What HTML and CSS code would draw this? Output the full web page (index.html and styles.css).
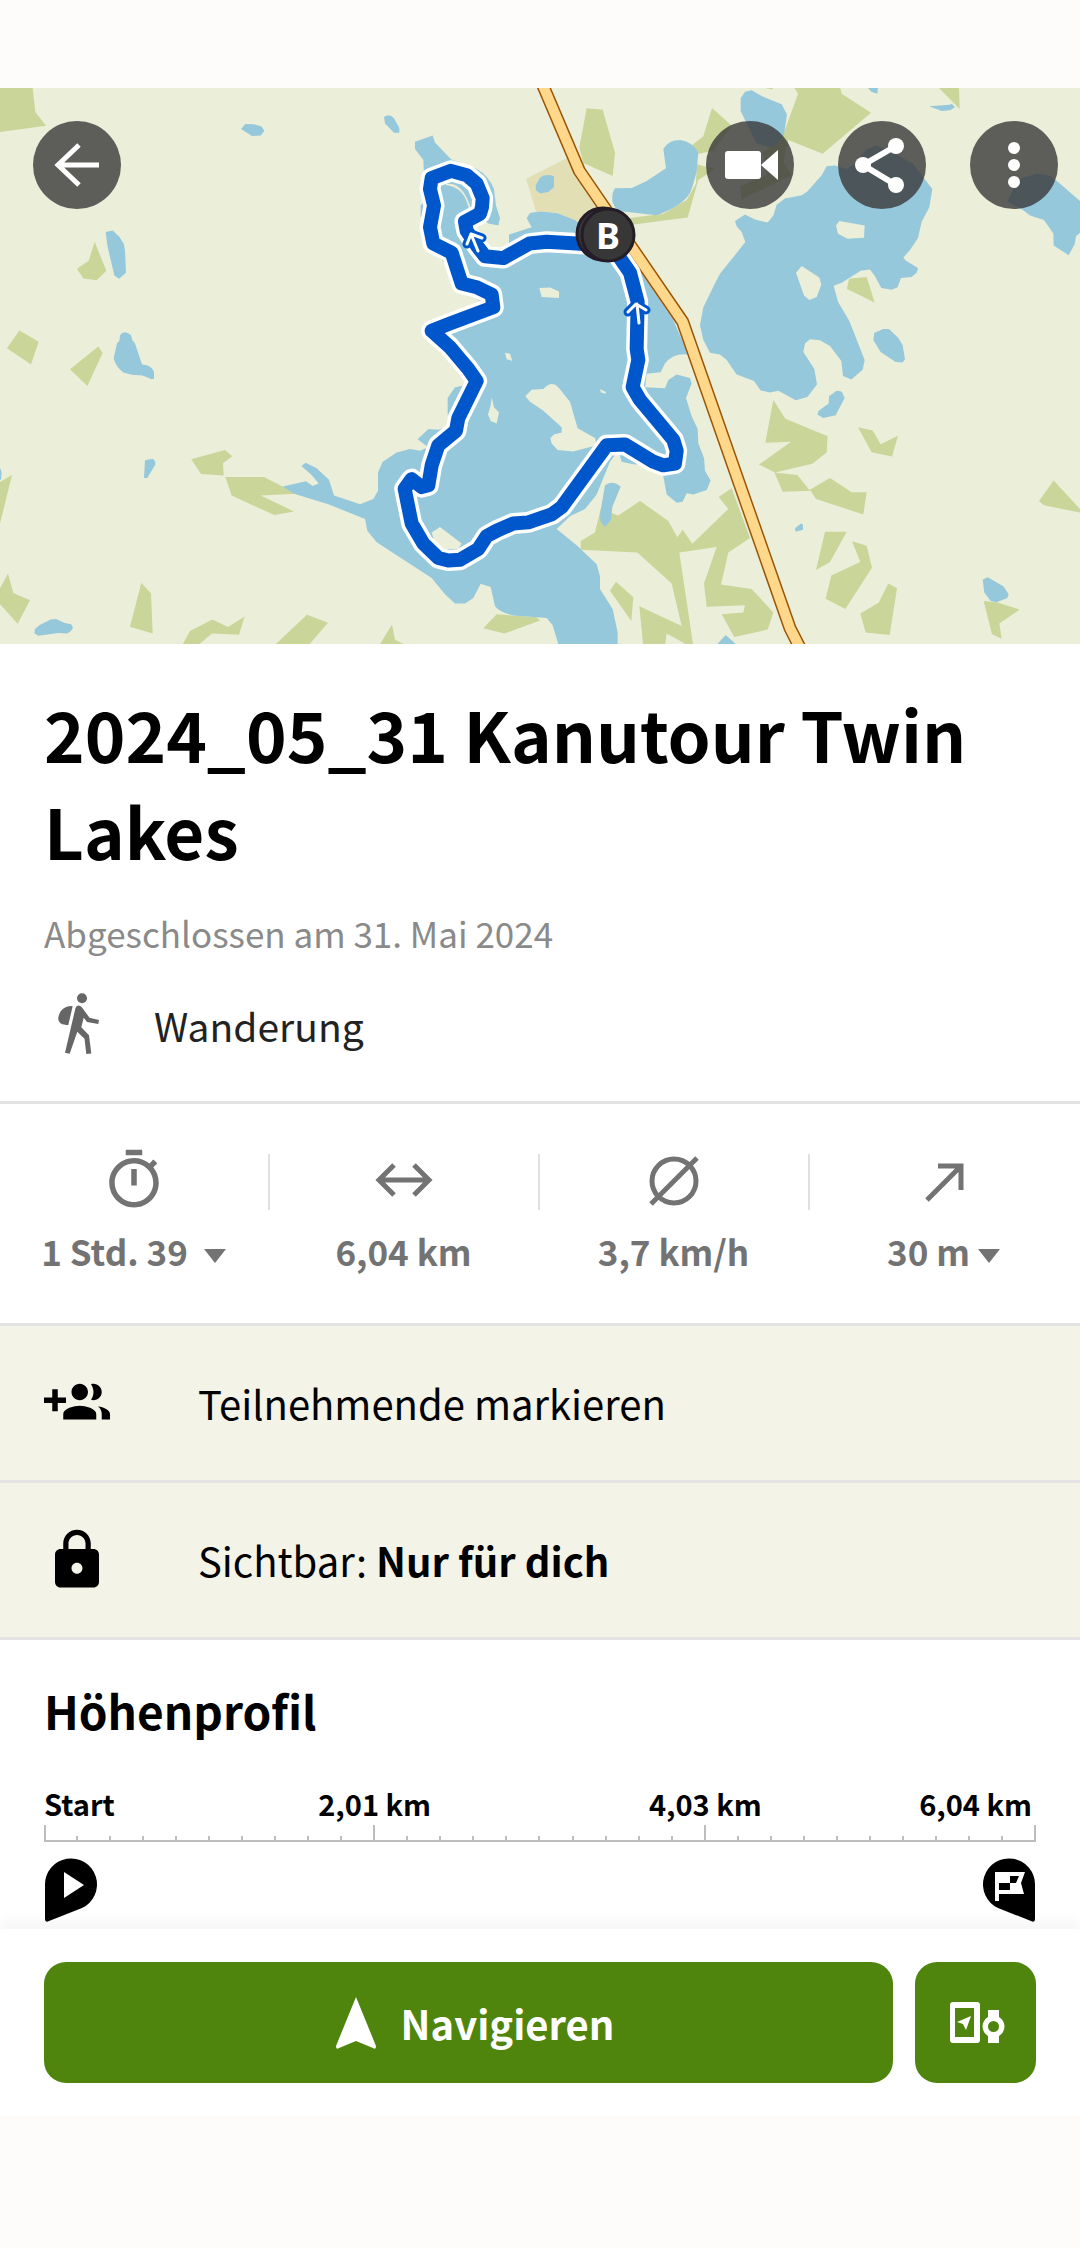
FILE: index.html
```html
<!DOCTYPE html>
<html lang="de">
<head>
<meta charset="utf-8">
<meta name="viewport" content="width=device-width, initial-scale=1">
<title>2024_05_31 Kanutour Twin Lakes</title>
<link rel="stylesheet" href="styles.css">
</head>
<body>
<header class="map">
  <svg class="map-canvas" viewBox="0 88 1080 556" preserveAspectRatio="xMidYMid slice" role="img" aria-label="Karte der Tour">
    <rect class="land" y="88" width="1080" height="556"/>
    <g transform="translate(0 80) scale(.33333 .3635)">
      <path class="wood" d="M0 22H98L106 88 138 126 0 143zM284 445 319 525 290 551 250 546 231 519 266 497zM58 689 116 720 93 783 21 738zM295 733 308 751 262 842 210 796zM574 1043 675 1018 697 1035 669 1054 671 1088 603 1084zM676 1092H792L890 1138 782 1143 882 1187 823 1197 695 1143zM0 1106 36 1087 0 1220zM0 1398 24 1358 40 1411 90 1431 53 1496 0 1442zM424 1384 453 1412 458 1523 390 1504zM545 1558 570 1516 637 1484 684 1505 734 1476 717 1526 636 1523 590 1558zM820 1558 921 1471 984 1493 923 1558z"/>
      <path class="water" d="M723 135 736 121 762 122 785 128 793 140 782 153 756 154zM317 418 338 414 358 431 372 452 375 470 378 530 357 547 343 538 322 455zM360 702Q372 686 393 702L397 716 405 725 426 783Q452 783 462 803V822L455 823 428 813 396 811 370 805Q346 788 341 765L351 724 358 718zM435 1046 459 1042 466 1050V1058L442 1095H432zM0 1067 5 1080 3 1100H0zM103 1522 105 1510 118 1500 152 1484 168 1483 194 1494 214 1497 219 1507 213 1516 202 1523 175 1521 115 1529z"/>
    </g>
    <g transform="translate(370 80) scale(.33333 .3635)">
      <path class="field" d="M468 272 590 215 612 255 690 350 640 395 560 365 498 362z"/>
      <path class="wood" d="M650 78 698 82 735 200 728 264 640 228 628 185zM1026 77 1085 125 1050 170 1030 195 985 203 965 180 1000 155zM980 232 1035 245 985 275 953 378 785 398 775 380 880 368 950 330 978 285zM632 1268 675 1245 692 1180 745 1198 810 1158 895 1213 922 1258 938 1237 967 1276 1075 1180 1046 1147 1085 1123 1140 1260 1075 1300 1053 1388 1145 1400 1210 1465 1193 1512 1093 1532 1055 1470 1120 1465 1125 1445 1010 1449 1002 1385 1040 1285 928 1300 970 1558H960L890 1523 885 1558H820L808 1448 935 1502 905 1385 802 1300 632 1292zM738 1380 790 1423 784 1488 720 1405zM380 1470 500 1478 510 1487 403 1523 340 1508zM26 1558 66 1498 75 1540 115 1558z"/>
      <path class="water" d="M42 102Q58 90 72 105L88 132V145H72L45 120zM880 190Q895 165 930 165 965 168 985 200L980 250Q970 290 960 310 940 345 860 372L740 360 727 335Q725 310 735 298L785 297 830 278 888 243zM497 290 510 268Q530 256 552 265V295L535 308 510 312 498 303zM1097 390 1110 380 1115 410 1105 408zM1036 1558 1067 1527 1105 1558zM690 1195 705 1115Q730 1100 752 1118L727 1175 723 1210 705 1230 692 1215z"/>
      <path class="water" d="M135 170 188 153 195 172 243 218 320 245Q355 262 372 300L378 345 390 380 385 400 355 395 320 370 310 450 400 480 417 470V425L485 405 470 380 480 366 510 362 560 366 615 385 700 440 815 530 910 660 955 755Q910 750 885 780L872 804 830 808 825 845 885 848 895 825 920 810 960 820 965 835 948 875 965 925 983 960 985 1000 1002 1040 1005 1075 1022 1102 1010 1128 970 1140 950 1137 938 1160 920 1163 890 1140 880 1090 860 1060 790 1057 755 1050 745 1020 720 1050 680 1140 645 1180 600 1200 560 1235 620 1280 680 1332 690 1365V1400L728 1455 743 1520V1558H567L548 1500 530 1480 430 1473Q390 1465 375 1448L362 1395 332 1386 310 1425 285 1440H255L225 1415 185 1370 20 1272-8 1240-15 1208-125 1167-228 1138-262 1118-192 1104-172 1117-154 1110-175 1087-206 1062-193 1053-160 1068-123 1100-108 1143-30 1167 10 1153 24 1130V1080L38 1050 80 1025 120 1015 150 1020 175 1010 143 988 175 960 205 962 245 950 233 920V875L255 845 285 840 320 830 240 735 225 700 260 650 330 610 270 565 190 460 152 375V345L165 330 160 220 135 190z"/>
      <path class="land" d="M508 572 540 571 567 582V600L515 597zM405 750 420 753 427 773 410 768zM690 850 708 858 707 863 693 860zM365 873 372 900 387 915 380 945 362 938 354 920 362 895zM466 870 485 852 520 850Q545 826 565 845L600 885 623 958 675 985 680 1005 610 1022 563 1018 545 1000 541 985 552 975 575 970V955L520 910 480 885zM185 1245 210 1230 275 1275 265 1290 200 1290zM228 286Q275 280 300 345L298 360Q285 295 228 289z"/>
    </g>
    <g transform="translate(720 80) scale(.33333 .3635)">
      <path class="wood" d="M135 22H158V26zM222 20H360L365 38 453 90 308 203 205 165 190 225 215 262 65 328 60 292 140 262 130 200 190 150 234 38zM657 22H717L719 80zM381 575 387 547 440 542 464 612zM160 880 196 932 323 980 320 1025 277 1056 165 1080 117 1058 213 995 136 998zM163 1080 232 1087 268 1128 330 1095 395 1134H440L430 1195 288 1153 272 1130 188 1133zM414 955 458 964 482 1002 534 979 516 1036 455 1024zM957 1158 1001 1102 1085 1185V1191L972 1170zM315 1243H380L330 1326 288 1348zM396 1269 440 1281 456 1342 376 1455 317 1427 334 1363 421 1326zM505 1385 531 1398 509 1527 437 1520 421 1468 476 1438zM791 1433 830 1437 899 1457 838 1495 845 1537 816 1525z"/>
      <path class="water" d="M62 50 75 32 95 28 125 44 185 67 201 95 192 150Q170 185 150 185L110 175 80 120 62 85zM442 20H474L472 38 455 33zM627 72 690 68 695 65 705 75 690 83 665 85zM45 388 75 370 105 384 143 392 160 373 170 343 195 326 245 317 262 307 305 262 320 237 345 235 380 245 405 230 440 190 470 180 510 195 578 230 637 300 628 350 605 390 594 435 570 468 550 488 558 497 594 517 590 530 575 542 543 545 533 570 515 577 484 572 465 540 450 521 422 525 365 558 341 566 354 610 388 663 434 770 428 797 394 824 369 814 364 773 330 732 300 716 270 713 255 725 250 748 283 795 291 838 262 872 227 881 175 855 150 860 122 854 102 828 50 810 20 770 0 755-30 750-50 715-60 675-50 625-10 550 0 533 76 446 65 418 50 402zM460 715 463 695 490 685H507L535 710 548 730 555 768 548 777 527 776 482 748zM327 870 350 855 365 857 374 875 347 922 310 930 292 920 296 910 326 890zM225 1233 243 1220 249 1223V1237L227 1243zM788 1375 803 1368 850 1393 866 1415 862 1425 830 1437 812 1433 793 1410zM862 335 880 300 900 272 950 258 985 262 1010 277 1085 337V416L1068 430 1064 452 1046 482 1001 455 1000 422 972 385 930 373 910 358z"/>
      <path class="land" d="M348 400 358 388 434 400 432 434 383 437 354 423zM228 530 245 512 298 543 304 563 290 597 268 605 252 593z"/>
    </g>
    <g transform="translate(370 80) scale(.33333 .3635)">
      <path class="road-edge" d="M510-4 628 250 938 665 1260 1508 1300 1580"/>
      <path class="road" d="M510-4 628 250 938 665 1260 1508 1300 1580"/>
      <path class="route-halo" d="M700 455 620 450 530 445 478 450 400 490 345 485 320 455 290 415 285 390 330 368 336 350 338 325 320 285 290 262 243 250 185 270 180 300 192 345 180 405 190 450 245 475 275 560 320 570 365 590 370 625 240 670 185 690 240 735 295 795 320 828 265 930 258 965 205 1005 185 1060 175 1115 155 1120 125 1098 104 1125 125 1220 160 1275 205 1315 235 1322 270 1320 325 1290 350 1255 380 1240 430 1220 475 1217 545 1195 575 1175 710 1005 765 1003 850 1050 880 1060 915 1055 920 1020 910 990 810 880 788 845 805 770 800 740 803 610 780 530 720 450"/>
      <path class="route" d="M700 455 620 450 530 445 478 450 400 490 345 485 320 455 290 415 285 390 330 368 336 350 338 325 320 285 290 262 243 250 185 270 180 300 192 345 180 405 190 450 245 475 275 560 320 570 365 590 370 625 240 670 185 690 240 735 295 795 320 828 265 930 258 965 205 1005 185 1060 175 1115 155 1120 125 1098 104 1125 125 1220 160 1275 205 1315 235 1322 270 1320 325 1290 350 1255 380 1240 430 1220 475 1217 545 1195 575 1175 710 1005 765 1003 850 1050 880 1060 915 1055 920 1020 910 990 810 880 788 845 805 770 800 740 803 610 780 530 720 450"/>
    </g>
    <path class="arrow-halo" d="M639 323 637 304M628 312 636 304 646 310M478 251 471 234M467 244 471 234 482 238"/>
    <path class="arrow" d="M639 323 637 304M628 312 636 304 646 310M478 251 471 234M467 244 471 234 482 238"/>
    <circle class="pin-dot" cx="603" cy="234" r="26"/>
    <circle class="pin-dot" cx="608" cy="235" r="26"/>
    <text class="pin-letter" x="608" y="249">B</text>
  </svg>
  <nav class="map-nav">
    <button class="round" aria-label="Zurück"><svg viewBox="0 0 88 88"><path class="line" d="M66 44H26M46 24 25 44 46 64"/></svg></button>
    <span class="spacer"></span>
    <button class="round" aria-label="Video"><svg viewBox="0 0 88 88"><rect x="19" y="30" width="36" height="28" rx="3"/><path d="M55 44 72 29V59z"/></svg></button>
    <button class="round" aria-label="Teilen"><svg viewBox="0 0 88 88"><path class="thin" d="M58 25 25 44 58 64"/><circle cx="58" cy="25" r="8"/><circle cx="25" cy="44" r="8"/><circle cx="58" cy="64" r="8"/></svg></button>
    <button class="round" aria-label="Mehr"><svg viewBox="0 0 88 88"><circle cx="44" cy="27" r="6"/><circle cx="44" cy="44" r="6"/><circle cx="44" cy="61" r="6"/></svg></button>
  </nav>
</header>
<main>
  <section class="intro">
    <h1>2024_05_31 Kanutour Twin Lakes</h1>
    <p class="date">Abgeschlossen am 31. Mai 2024</p>
    <p class="sport">
      <svg class="icon" viewBox="0 0 66 66"><circle cx="38" cy="6.300" r="5"/><path d="M28.700 14C21 13 14.500 19 14.300 26.500 14.300 31 18 33 24.300 33z"/><path d="M31.500 16Q32 13.500 34.500 13.500 36.500 13.500 38 15.500L45.500 25.700 55 28 54.300 32 43 30 39.700 25.700 37.300 35.300 45 43.300 47.300 61.500 42.300 62 40.500 46.700 33.300 39.700 25.700 61.700 21 60.700z"/></svg>
      <span>Wanderung</span>
    </p>
  </section>
  <section class="stats">
    <button class="stat">
      <svg class="icon" viewBox="0 0 24 24"><path d="M15 1H9v2h6V1zm-4 13h2V8h-2v6zm8.03-6.61 1.42-1.42c-.43-.51-.9-.99-1.41-1.41l-1.42 1.42C16.07 4.74 14.12 4 12 4c-4.97 0-9 4.03-9 9s4.02 9 9 9 9-4.03 9-9c0-2.12-.74-4.07-1.97-5.61zM12 20c-3.87 0-7-3.13-7-7s3.13-7 7-7 7 3.13 7 7-3.13 7-7 7z"/></svg>
      <span class="value">1 Std. 39&nbsp;<svg class="caret" viewBox="0 0 22 14"><path d="M0 0H22L11 14z"/></svg></span>
    </button>
    <div class="stat">
      <svg class="icon" viewBox="0 0 66 66"><path class="stroke" d="M8 33H58M23 18 8 33 23 48M43 18 58 33 43 48"/></svg>
      <span class="value">6,04 km</span>
    </div>
    <div class="stat">
      <svg class="icon" viewBox="0 0 66 66"><circle class="stroke" cx="33" cy="34" r="22"/><path class="stroke" d="M10 57 56 11"/></svg>
      <span class="value">3,7 km/h</span>
    </div>
    <button class="stat">
      <svg class="icon" viewBox="0 0 66 66"><path class="stroke" d="M16 53 49 20M27 19H50V43"/></svg>
      <span class="value">30 m<svg class="caret" viewBox="0 0 22 14"><path d="M0 0H22L11 14z"/></svg></span>
    </button>
  </section>
  <section class="options">
    <button class="option">
      <svg class="icon" viewBox="0 0 24 24"><path d="M8 10H5V7H3v3H0v2h3v3h2v-3h3v-2zm10 1c1.66 0 2.99-1.34 2.99-3S19.66 5 18 5c-.32 0-.63.05-.91.14.57.81.9 1.79.9 2.86s-.34 2.04-.9 2.86c.28.09.59.14.91.14zm-5 0c1.66 0 2.99-1.34 2.99-3S14.66 5 13 5c-1.66 0-3 1.34-3 3s1.34 3 3 3zm6.62 2.16c.83.73 1.38 1.66 1.38 2.84v2h3v-2c0-1.54-2.37-2.49-4.38-2.84zM13 13c-2 0-6 1-6 3v2h12v-2c0-2-4-3-6-3z"/></svg>
      <span>Teilnehmende markieren</span>
    </button>
    <button class="option">
      <svg class="icon" viewBox="0 0 24 24"><path d="M18 8h-1V6c0-2.76-2.24-5-5-5S7 3.240 7 6v2H6c-1.100 0-2 .9-2 2v10c0 1.100.9 2 2 2h12c1.100 0 2-.9 2-2V10c0-1.100-.9-2-2-2zm-6 9c-1.100 0-2-.9-2-2s.9-2 2-2 2 .9 2 2-.9 2-2 2zM15.100 8H8.900V6c0-1.710 1.390-3.100 3.100-3.100s3.100 1.390 3.100 3.100v2z"/></svg>
      <span>Sichtbar: <b>Nur für dich</b></span>
    </button>
  </section>
  <section class="profile">
    <h2>Höhenprofil</h2>
    <div class="axis-labels"><span>Start</span><span>2,01 km</span><span>4,03 km</span><span>6,04 km</span></div>
    <svg class="axis" viewBox="0 0 992 18" preserveAspectRatio="none"><path d="M0 16H992M1 0V16M330 0V16M661 0V16M991 0V16M33 11V16M66 11V16M99 11V16M132 11V16M165 11V16M198 11V16M231 11V16M264 11V16M297 11V16M363 11V16M396 11V16M429 11V16M462 11V16M495 11V16M529 11V16M562 11V16M595 11V16M628 11V16M694 11V16M727 11V16M760 11V16M793 11V16M826 11V16M859 11V16M892 11V16M925 11V16M958 11V16"/></svg>
    <div class="markers">
      <svg class="marker" viewBox="0 0 54 64"><path d="M1 27A26 26 0 1 1 38 50L5 63Q1 65 1 61z"/><path class="cut" d="M20 14 40 27 20 40z"/></svg>
      <svg class="marker" viewBox="0 0 54 64"><path d="M53 27A26 26 0 1 0 16 50L49 63Q53 65 53 61z"/><path class="cut" d="M13 14H43L39 25 42 36H17V43H13z"/><path d="M17 25H28V18H37L34 25H28V32H17z"/></svg>
    </div>
  </section>
</main>
<footer class="actions">
  <button class="primary navigate"><svg class="nav-arrow" viewBox="0 0 42 54"><path d="M21 1 41 50Q41 54 38 52L21 45 4 52Q1 54 1 50z"/></svg>Navigieren</button>
  <button class="primary square" aria-label="An Gerät senden"><svg viewBox="0 0 66 66"><path fill-rule="evenodd" d="M10 12H34Q37 12 37 15V50Q37 53 34 53H10Q7 53 7 50V15Q7 12 10 12zM12 18V47H31V18z"/><path d="M28 26 23 40 20 34 14 32z"/><path fill-rule="evenodd" d="M45 20H56V27A11 11 0 0 1 56 46V53H45V46A11 11 0 0 1 45 27zM50.500 31A5.500 5.500 0 1 0 50.500 42 5.500 5.500 0 0 0 50.500 31z"/></svg></button>
</footer>
</body>
</html>
```
FILE: styles.css
```css
* { box-sizing: border-box; }
body {
  margin: 0;
  padding: 88px 0 132px;
  background: #fdfcfa;
  color: #000;
  font-family: "Noto Sans CJK SC", "Noto Sans", sans-serif;
}
h1, h2, p { margin: 0; }
button {
  margin: 0;
  padding: 0;
  border: 0;
  background: none;
  color: inherit;
  font: inherit;
  cursor: pointer;
}
svg { display: block; fill: currentColor; }
.icon { flex: none; width: 66px; height: 66px; }

.map { position: relative; }
.map-canvas { width: 100%; height: 556px; }
.land { fill: #ebeed8; }
.wood { fill: #cad599; }
.field { fill: #e2dfb5; }
.water { fill: #96c8db; }
.road-edge, .road, .route, .route-halo, .arrow, .arrow-halo {
  fill: none;
  stroke-linejoin: round;
  stroke-linecap: round;
  vector-effect: non-scaling-stroke;
}
.road-edge { stroke: #9a5606; stroke-width: 13px; }
.road { stroke: #ffd88b; stroke-width: 10px; }
.route-halo { stroke: #fff; stroke-width: 21px; }
.route { stroke: #0057cc; stroke-width: 14px; }
.arrow-halo { stroke: #0057cc; stroke-width: 9px; }
.arrow { stroke: #fff; stroke-width: 3px; }
.pin-dot { fill: #373737; stroke: #251c27; stroke-width: 3px; }
.pin-letter {
  fill: #fff;
  font: bold 36px "Noto Sans", sans-serif;
  text-anchor: middle;
}
.map-nav {
  position: absolute;
  inset: 33px 22px auto 33px;
  display: flex;
  gap: 44px;
}
.spacer { flex: 1; }
.round {
  width: 88px;
  height: 88px;
  border-radius: 50%;
  background: rgba(54, 54, 54, .79);
  color: #fff;
}
.line { fill: none; stroke: #fff; stroke-width: 5px; }
.thin { fill: none; stroke: #fff; stroke-width: 6px; }

main { background: #fff; }
.intro { padding: 41px 44px 43px; border-bottom: 3px solid #e3e3e3; }
h1 { font-size: 69px; line-height: 97px; }
.date { padding-top: 30px; color: #8a8a8a; font-size: 35px; line-height: 48px; }
.sport {
  display: flex;
  align-items: center;
  gap: 44px;
  padding-top: 35px;
  color: #222;
  font-size: 39px;
  line-height: 56px;
}
.sport .icon { color: #666; }

.stats {
  display: grid;
  grid-template-columns: repeat(4, 1fr);
  padding: 43px 0 47px;
  color: #737373;
}
.stat {
  position: relative;
  display: flex;
  flex-direction: column;
  align-items: center;
  gap: 13px;
  padding-right: 3px;
}
.stat:not(:last-child)::after {
  content: "";
  position: absolute;
  top: 7px;
  right: 0;
  width: 2px;
  height: 56px;
  background: #e0e0e0;
}
.value {
  display: flex;
  align-items: center;
  gap: 8px;
  font-size: 35px;
  font-weight: 700;
  line-height: 50px;
}
.caret { width: 22px; height: 14px; margin-top: 10px; }
.stroke { fill: none; stroke: currentColor; stroke-width: 5px; }

.options { border-top: 3px solid #e3e3e3; background: #f4f3e7; }
.option {
  display: flex;
  align-items: center;
  gap: 88px;
  width: 100%;
  padding: 44px;
  border-bottom: 3px solid #e3e3e3;
  font-size: 40px;
  line-height: 56px;
  text-align: left;
}

.profile { padding: 37px 44px 7px; }
h2 { font-size: 46px; line-height: 66px; }
.axis-labels {
  display: grid;
  grid-template-columns: 1fr 2fr 2fr 1fr;
  padding-top: 39px;
  font-size: 29px;
  font-weight: 700;
  line-height: 43px;
  text-align: center;
}
.axis-labels :first-child { text-align: left; }
.axis-labels :last-child { padding-right: 4px; text-align: right; }
.axis { width: 100%; height: 18px; fill: none; stroke: #bdbdbd; stroke-width: 2px; }
.markers { display: flex; justify-content: space-between; padding-top: 15px; }
.marker { width: 54px; height: 64px; }
.cut { fill: #fff; }

.actions {
  position: relative;
  display: flex;
  gap: 22px;
  padding: 33px 44px;
  background: #fff;
  box-shadow: 0 -8px 12px rgba(0, 0, 0, .04);
}
.primary {
  display: flex;
  flex: 1;
  align-items: center;
  justify-content: center;
  gap: 24px;
  height: 121px;
  border-radius: 22px;
  background: #4f850d;
  color: #fff;
  font-size: 40px;
  font-weight: 700;
}
.navigate { padding-left: 12px; }
.nav-arrow { width: 42px; height: 54px; }
.square { flex: 0 0 121px; }
.square svg { width: 66px; height: 66px; }
```
